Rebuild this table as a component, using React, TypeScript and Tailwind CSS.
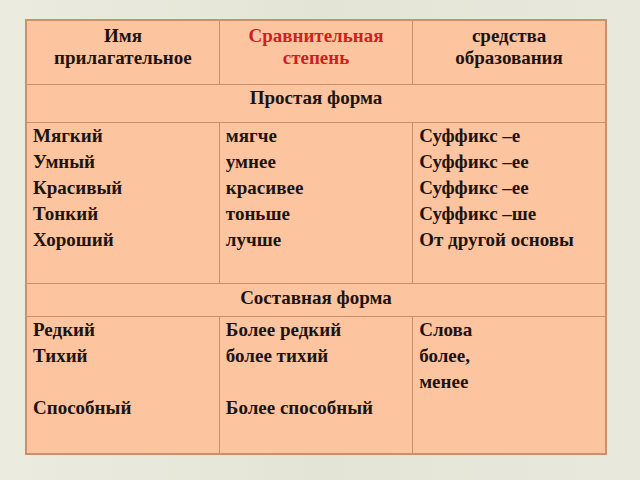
const simple = [
    ["Мягкий", "мягче", "Суффикс –е"],
    ["Умный", "умнее", "Суффикс –ее"],
    ["Красивый", "красивее", "Суффикс –ее"],
    ["Тонкий", "тоньше", "Суффикс –ше"],
    ["Хороший", "лучше", "От другой основы"],
];

function Lines({ items }: { items: string[] }) {
    return (
        <div className="flex flex-col">
            {items.map((t, i) => (
                <div key={i} className="h-[26px] whitespace-nowrap">
                    {t}
                </div>
            ))}
        </div>
    );
}

export default function App() {
    const cell = "border border-[#c8916c] align-top pl-[6px] pr-[6px] pt-0";
    return (
        <div className="w-[640px] h-[480px] bg-gradient-to-r from-[#ebebe0] via-[#e4e4d6] to-[#e8e8dd] pl-[25px] pt-[19px] font-['Liberation_Serif',serif] font-bold text-[19px] leading-[26px] text-[#1c1412]">
            <table className="w-[582px] h-[434px] table-fixed border-collapse border-2 border-[#c8916c] bg-[#fdc4a0]">
                <tbody>
                    <tr className="h-[64px]">
                        <td className="border border-[#c8916c] align-top text-center pt-[4px] leading-[22px]">
                            Имя
                            <br />
                            прилагательное
                        </td>
                        <td className="border border-[#c8916c] align-top text-center pt-[4px] leading-[22px] text-[#cf1f1f]">
                            Сравнительная
                            <br />
                            степень
                        </td>
                        <td className="border border-[#c8916c] align-top text-center pt-[4px] leading-[22px]">
                            средства
                            <br />
                            образования
                        </td>
                    </tr>
                    <tr className="h-[38px]">
                        <td colSpan={3} className="border border-[#c8916c] text-center pb-[10px]">
                            Простая форма
                        </td>
                    </tr>
                    <tr className="h-[161px]">
                        <td className={cell}>
                            <Lines items={simple.map((r) => r[0])} />
                        </td>
                        <td className={cell}>
                            <Lines items={simple.map((r) => r[1])} />
                        </td>
                        <td className={cell}>
                            <Lines items={simple.map((r) => r[2])} />
                        </td>
                    </tr>
                    <tr className="h-[33px]">
                        <td colSpan={3} className="border border-[#c8916c] text-center pb-[4px]">
                            Составная форма
                        </td>
                    </tr>
                    <tr className="h-[138px]">
                        <td className={cell}>
                            <Lines items={["Редкий", "Тихий", "", "Способный"]} />
                        </td>
                        <td className={cell}>
                            <Lines items={["Более редкий", "более тихий", "", "Более способный"]} />
                        </td>
                        <td className={cell}>
                            <Lines items={["Слова", "более,", "менее"]} />
                        </td>
                    </tr>
                </tbody>
            </table>
        </div>
    );
}
